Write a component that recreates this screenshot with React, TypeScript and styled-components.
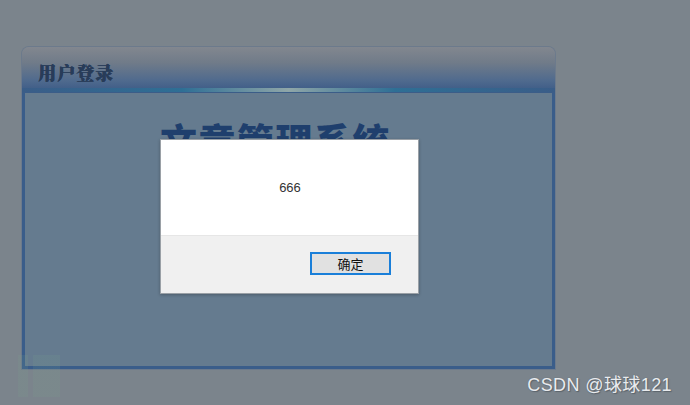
import React from 'react';
import styled, {createGlobalStyle} from "styled-components";

const GlobalStyle = createGlobalStyle`
  html, body {
    margin: 0;
    padding: 0;
    background: #7b848c;
  }
  body {
    font-family: "Liberation Sans", "Noto Sans CJK SC", sans-serif;
  }
`

function App() {
    return (
        <>
            <GlobalStyle/>
            <Page>
                <LoginPanel>
                    <PanelHeader>
                        <HeaderTitle>用户登录</HeaderTitle>
                        <HeaderGlow/>
                    </PanelHeader>
                    <PanelBody>
                        <SystemTitle>文章管理系统</SystemTitle>
                    </PanelBody>
                </LoginPanel>
                <FooterRow>
                    <Deco/>
                    <Watermark>CSDN @球球121</Watermark>
                </FooterRow>
            </Page>
            <AlertBox>
                <AlertMessage>666</AlertMessage>
                <AlertFooter>
                    <OkButton>确定</OkButton>
                </AlertFooter>
            </AlertBox>
        </>
    );
}

export default App;

const Page = styled.div`
  width: 690px;
  height: 405px;
  box-sizing: border-box;
  padding: 47px 0 0 22px;
  display: flex;
  flex-direction: column;
  overflow: hidden;
`

const LoginPanel = styled.div`
  width: 533px;
  height: 322px;
  display: flex;
  flex-direction: column;
  border-radius: 7px 7px 0 0;
  overflow: hidden;
  box-shadow: 0 0 0 1px #6c7a8c;
`

const PanelHeader = styled.div`
  position: relative;
  height: 45px;
  flex: none;
  display: flex;
  align-items: center;
  padding-left: 16px;
  background: linear-gradient(to bottom, #82878f 0%, #707b89 35%, #4f6a8e 75%, #3b5a86 100%);
  border-bottom: 1px solid #3b5d88;
`

const HeaderTitle = styled.h2`
  margin: 0;
  padding-top: 4px;
  font-family: "Noto Serif CJK SC", "Noto Sans CJK SC", serif;
  font-size: 18px;
  font-weight: 900;
  color: #283c59;
  letter-spacing: 1px;
  text-shadow: 0.6px 0 0 #283c59, 0 0.4px 0 #283c59;
`

const HeaderGlow = styled.div`
  position: absolute;
  left: 0;
  right: 0;
  bottom: 0;
  height: 4px;
  background: linear-gradient(to right, #3a5d88 0%, #2e6f95 30%, #8fa6a8 50%, #2e6f95 70%, #3a5d88 100%);
`

const PanelBody = styled.div`
  flex: 1;
  background: #657b8f;
  border: 3px solid #3a5d8a;
  border-top: none;
  display: flex;
  flex-direction: column;
  align-items: flex-start;
  padding: 29px 0 0 135px;
`

const SystemTitle = styled.h1`
  margin: 0;
  font-family: "Noto Sans CJK SC", sans-serif;
  font-size: 37px;
  font-weight: 900;
  line-height: 1;
  letter-spacing: 1.5px;
  color: #1f3f6d;
`

const FooterRow = styled.div`
  flex: 1;
  display: flex;
  justify-content: space-between;
  align-items: flex-start;
  padding-right: 18px;
`

const Deco = styled.div`
  width: 42px;
  height: 42px;
  margin: -14px 0 0 -4px;
  background: linear-gradient(to right, rgba(120, 165, 140, 0.14) 0 10px, transparent 10px 15px, rgba(120, 165, 140, 0.14) 15px 100%);
`

const Watermark = styled.div`
  margin-top: 1px;
  font-family: "Liberation Sans", "Noto Sans CJK SC", sans-serif;
  font-size: 18px;
  letter-spacing: 0.4px;
  color: #e9ebee;
  text-shadow: 0 0 1px #5b636b, 1px 1px 1px #5b636b;
`

const AlertBox = styled.div`
  position: absolute;
  left: 160px;
  top: 139px;
  width: 259px;
  height: 155px;
  box-sizing: border-box;
  border: 1px solid #9aa0a6;
  background: #ffffff;
  display: flex;
  flex-direction: column;
  box-shadow: 0 1px 3px rgba(0, 0, 0, 0.25);
`

const AlertMessage = styled.div`
  height: 95px;
  display: flex;
  align-items: center;
  justify-content: center;
  font-family: "Liberation Sans", sans-serif;
  font-size: 13px;
  color: #333;
  padding-left: 1px;
`

const AlertFooter = styled.div`
  flex: 1;
  background: #f0f0f0;
  border-top: 1px solid #e6e6e6;
  display: flex;
  justify-content: flex-end;
  align-items: flex-start;
  padding: 16px 27px 0 0;
`

const OkButton = styled.button`
  width: 81px;
  height: 23px;
  box-sizing: border-box;
  border: 2px solid #1a7fd9;
  background: #e1e1e1;
  font-family: "Noto Sans CJK SC", sans-serif;
  font-size: 13px;
  color: #111;
  padding: 0;
  cursor: pointer;
`
